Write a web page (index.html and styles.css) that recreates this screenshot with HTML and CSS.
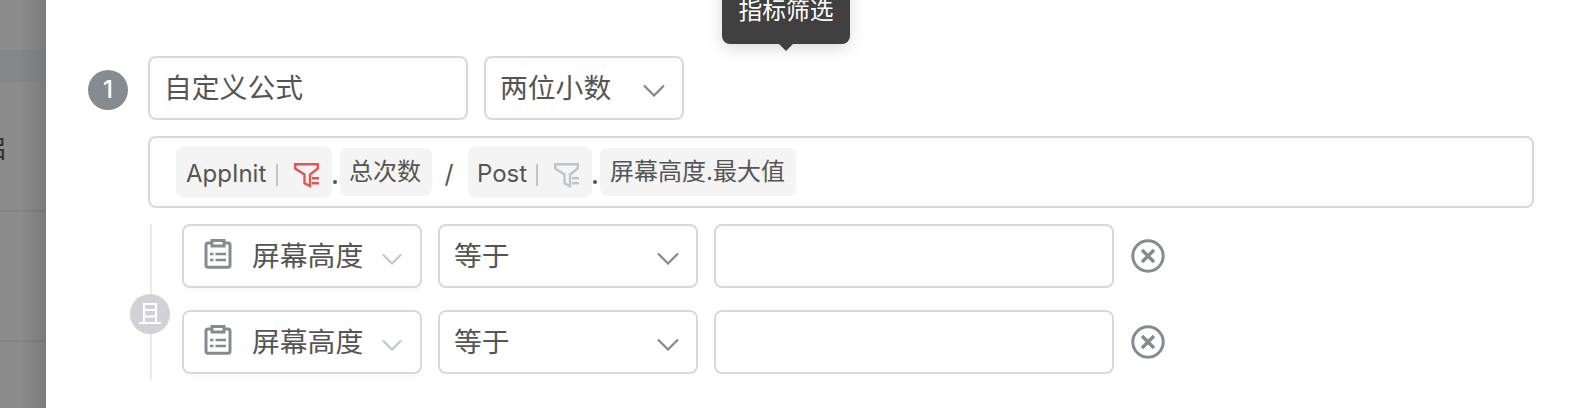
FILE: index.html
```html
<!DOCTYPE html>
<html lang="zh-CN">
<head>
<meta charset="utf-8">
<title>自定义公式</title>
<link rel="stylesheet" href="styles.css">
</head>
<body>
<svg class="defs" width="0" height="0">
  <symbol id="chevron" viewBox="0 0 22 13"><path d="M1 1.5 11 11.5 21 1.5" fill="none" stroke="currentColor" stroke-width="2.300"/></symbol>
  <symbol id="funnel" viewBox="0 0 26 26"><path d="M1.200 1.200H23.800V5.500L16 11.500V23L10.500 20.200V11.500L1.200 5.500Z" fill="none" stroke="currentColor" stroke-width="2.400"/><path d="M18 15.200H25M18 20.200H25" stroke="currentColor" stroke-width="2.400"/></symbol>
  <symbol id="clipboard" viewBox="0 0 28 30"><path d="M8 4H4Q2 4 2 6V26Q2 28.300 4 28.300H24Q26 28.300 26 26V6Q26 4 24 4H20" fill="none" stroke="currentColor" stroke-width="3"/><path d="M8 1.500H20V7H8Z" fill="none" stroke="currentColor" stroke-width="3"/><path d="M6 15H9.500M11.500 15H22M6 21H9.500M11.500 21H22" stroke="currentColor" stroke-width="2.400"/></symbol>
  <symbol id="remove" viewBox="0 0 34 34"><circle cx="17" cy="17" r="15.200" fill="none" stroke="currentColor" stroke-width="3"/><path d="M11 11 23 23M23 11 11 23" stroke="currentColor" stroke-width="3.400"/></symbol>
</svg>
<div class="page">
  <aside class="backdrop">
    <div class="line band"></div>
    <div class="line cell"><span>启</span></div>
    <div class="line empty"></div>
  </aside>
  <main class="drawer">
    <div class="tooltip">指标筛选</div>
    <div class="badge">1</div>
    <section class="content">
      <div class="top">
        <div class="box name">自定义公式</div>
        <div class="box precision"><span>两位小数</span><svg class="chev"><use href="#chevron"/></svg></div>
      </div>
      <div class="box formula">
        <div class="tag event first"><span class="latin app">AppInit</span><i></i><svg class="funnel active"><use href="#funnel"/></svg></div>
        <span class="dot"></span>
        <div class="tag total">总次数</div>
        <span class="slash">/</span>
        <div class="tag event second"><span class="latin post">Post</span><i></i><svg class="funnel"><use href="#funnel"/></svg></div>
        <span class="dot"></span>
        <div class="tag measure">屏幕高度.最大值</div>
      </div>
      <div class="filters">
        <div class="relation"><div class="and"><svg width="22" height="22" viewBox="0 0 22 22"><path d="M5 20V1H17V20M5 7H17M5 13.500H17M0 20H22" fill="none" stroke="#fff" stroke-width="2.200"/></svg></div></div>
        <div class="rows">
          <div class="row">
            <div class="box field"><svg class="clip"><use href="#clipboard"/></svg><span>屏幕高度</span><svg class="chev small"><use href="#chevron"/></svg></div>
            <div class="box operator"><span>等于</span><svg class="chev"><use href="#chevron"/></svg></div>
            <div class="box value"></div>
            <svg class="remove"><use href="#remove"/></svg>
          </div>
          <div class="row">
            <div class="box field"><svg class="clip"><use href="#clipboard"/></svg><span>屏幕高度</span><svg class="chev small"><use href="#chevron"/></svg></div>
            <div class="box operator"><span>等于</span><svg class="chev"><use href="#chevron"/></svg></div>
            <div class="box value"></div>
            <svg class="remove"><use href="#remove"/></svg>
          </div>
        </div>
      </div>
    </section>
  </main>
</div>
</body>
</html>
```
FILE: styles.css
```css
* { box-sizing: border-box; }
body { margin: 0; overflow: hidden; font-family: Inter, "Noto Sans CJK SC", sans-serif; font-size: 27.800px; color: #555; }
svg { display: block; flex: none; }
.defs { position: absolute; }
.page { display: flex; height: 408px; }
.backdrop { width: 46px; flex: none; padding-top: 50px; overflow: hidden; background: linear-gradient(90deg, #8c8c8c 45%, #7b7b7b); }
.line { border-bottom: 2px solid rgba(0,0,0,.07); }
.band { height: 32px; background: rgba(105,115,125,.22); border: 0; }
.cell { height: 130px; padding-top: 46px; color: #333; font-size: 28px; line-height: 40px; }
.cell span { display: block; margin-left: -21px; }
.empty { height: 130px; }
.drawer { flex: 1; display: flex; align-items: flex-start; gap: 20px; padding: 56px 44px 0 42px; background: #fff; position: relative; }
.badge { width: 40px; height: 40px; margin-top: 14px; border-radius: 50%; background: #868b90; color: #fff; font: 500 24px/40px Inter, sans-serif; text-align: center; }
.content { flex: 1; display: flex; flex-direction: column; gap: 16px; }
.top, .row { display: flex; gap: 16px; align-items: center; }
.box { display: flex; align-items: center; height: 64px; border: 2px solid #d9d9d9; border-radius: 8px; background: #fff; padding: 0 17px 0 14px; white-space: nowrap; line-height: 40px; }
.name { width: 320px; }
.precision { width: 200px; justify-content: space-between; }
.chev { width: 22px; height: 13px; color: #868b90; margin-top: 5px; }
.formula { height: 72px; padding: 8px 26px 0; align-items: flex-start; }
.tag { height: 48px; margin-top: 2px; border-radius: 8px; background: #f4f4f4; color: #555; padding: 0 10px; font-size: 24px; line-height: 48px; }
.event { display: flex; height: 52px; margin-top: 0; padding: 0 12px 0 10px; }
.first { width: 156px; }
.second { width: 124px; }
.latin { line-height: 56px; }
.post { margin-left: -1px; }
.event i { width: 2px; height: 22px; margin: 18px 0 0 auto; background: #bfc4c8; }
.funnel { width: 26px; height: 26px; margin: 17px 0 0 16px; color: #bfc4c8; }
.funnel.active { color: #e85450; }
.dot { width: 4px; height: 4px; margin: 34px 3px 0 1px; border-radius: 50%; background: #555; }
.total { width: 92px; padding-left: 9px; }
.slash { width: 36px; padding-right: 2px; text-align: center; font-size: 25px; line-height: 56px; }
.measure { width: 196px; }
.filters { display: flex; }
.relation { width: 34px; height: 156px; display: flex; align-items: center; background: linear-gradient(#e8eceb, #e8eceb) 2px 0 / 2px 100% no-repeat; }
.and { width: 40px; height: 40px; margin: 24px 0 0 -18px; border-radius: 50%; background: #d2d1d8; display: flex; align-items: center; justify-content: center; flex: none; }
.rows { display: flex; flex-direction: column; gap: 22px; }
.field { width: 240px; padding: 0 16px 0 20px; box-shadow: 0 4px 2px rgba(0,0,0,.02); }
.clip { width: 28px; height: 30px; margin-right: 20px; margin-top: -4px; color: #868b90; }
.chev.small { width: 20px; height: 12px; margin-left: auto; margin-right: 2px; color: #bfc4c8; }
.operator { width: 260px; justify-content: space-between; }
.value { width: 400px; }
.remove { width: 34px; height: 34px; color: #868b90; margin-left: 1px; }
.tooltip { position: absolute; left: 676px; top: -24px; width: 128px; height: 68px; border-radius: 8px; background: #404040; color: #fff; font-size: 23.800px; line-height: 69px; text-align: center; box-shadow: 0 4px 16px rgba(0,0,0,.15); }
.tooltip::after { content: ""; position: absolute; left: 57px; top: 68px; border: 7px solid transparent; border-top-color: #404040; border-bottom: 0; }
```
